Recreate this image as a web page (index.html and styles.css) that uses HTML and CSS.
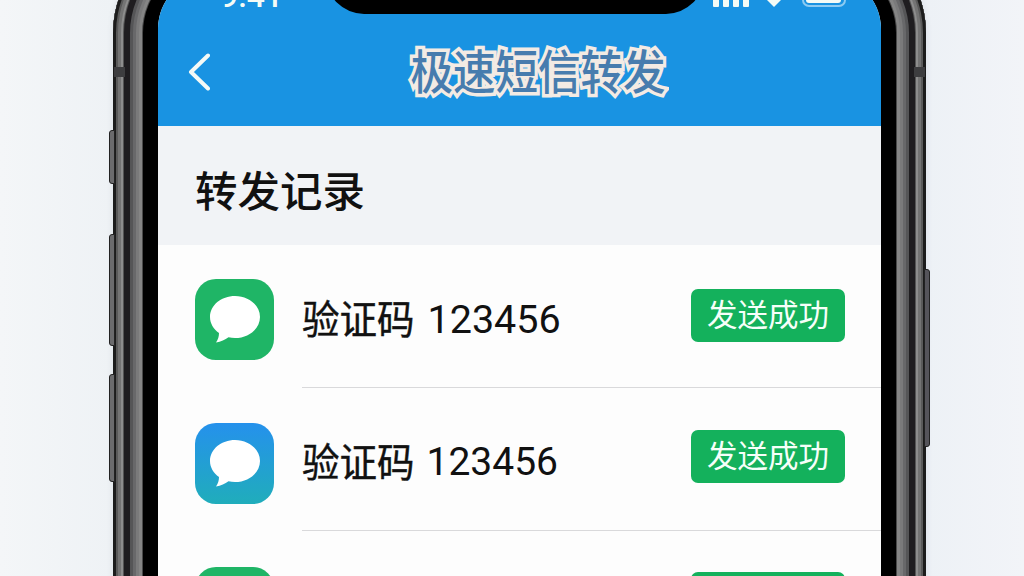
FILE: index.html
```html
<!DOCTYPE html>
<html lang="zh-CN">
<head>
  <meta charset="UTF-8">
  <meta name="viewport" content="width=device-width, initial-scale=1.0">
  <title>极速短信转发</title>
  <link rel="stylesheet" href="styles.css">
</head>
<body>
  <div class="phone">
    <!-- Side buttons -->
    <span class="side-btn mute"></span>
    <span class="side-btn vol-up"></span>
    <span class="side-btn vol-down"></span>
    <span class="side-btn power"></span>
    <span class="antenna left"></span>
    <span class="antenna right"></span>

    <div class="screen">
      <div class="notch"></div>

      <header class="header">
        <div class="status-bar">
          <span class="time">9:41</span>
          <svg class="status-icons" width="136" height="26" viewBox="0 0 136 26" fill="#f4fbf6">
            <rect x="0" y="14" width="6" height="12" rx="1"/>
            <rect x="10" y="10" width="6" height="16" rx="1"/>
            <rect x="20" y="6" width="6" height="20" rx="1"/>
            <rect x="30" y="2" width="6" height="24" rx="1"/>
            <path d="M54 19q7-6 14 0l-7 7z"/>
            <rect x="90" y="1" width="42" height="24" rx="6" fill="none" stroke="#8ccbf2" stroke-width="2"/>
            <rect x="93" y="4" width="35" height="18" rx="3"/>
          </svg>
        </div>
        <div class="title-bar">
          <svg class="back" width="22" height="38" viewBox="0 0 22 38" fill="none" stroke="#f4faf7" stroke-width="4" stroke-linecap="round" stroke-linejoin="round">
            <path d="M20 2.500L3 19L20 35.500"/>
          </svg>
          <h1 class="title">极速短信转发</h1>
        </div>
      </header>

      <div class="section-head">
        <h2>转发记录</h2>
      </div>

      <!-- Records -->
      <ul class="records">
        <li class="record">
          <div class="app-icon green">
            <svg width="50" height="47" viewBox="0 0 50 47" fill="#fff"><path d="M25 0C11.200 0 0 9.300 0 21C0 27.500 3.500 33 9 37C9 40.500 8 43.500 6 46.500C11 45.500 15 43.800 18.500 41.200C20.600 41.700 22.800 42 25 42C38.800 42 50 32.600 50 21S38.800 0 25 0z"/></svg>
          </div>
          <div class="record-body">
            <span class="record-text"><span class="label">验证码</span><span class="code">123456</span></span>
            <span class="badge">发送成功</span>
          </div>
        </li>
        <li class="record">
          <div class="app-icon blue">
            <svg width="50" height="47" viewBox="0 0 50 47" fill="#fff"><path d="M25 0C11.200 0 0 9.300 0 21C0 27.500 3.500 33 9 37C9 40.500 8 43.500 6 46.500C11 45.500 15 43.800 18.500 41.200C20.600 41.700 22.800 42 25 42C38.800 42 50 32.600 50 21S38.800 0 25 0z"/></svg>
          </div>
          <div class="record-body">
            <span class="record-text"><span class="label">验证码</span><span class="code">123456</span></span>
            <span class="badge">发送成功</span>
          </div>
        </li>
        <li class="record">
          <div class="app-icon green"></div>
          <div class="record-body">
            <span class="badge"></span>
          </div>
        </li>
      </ul>
    </div>
  </div>
</body>
</html>
```

FILE: styles.css
```css
:root {
  --blue: #1993e2;
  --green: #14b15c;
  --text-color: #111;
  --line: #d9d9db;
}

* {
  box-sizing: border-box;
  margin: 0;
  padding: 0;
}

html {
  overflow: hidden;
}

body {
  height: 576px;
  overflow: hidden;
  font-family: Roboto, "Noto Sans CJK SC", sans-serif;
  color: var(--text-color);
  background: linear-gradient(90deg, #f4f6f8 0, #eef2f5 113px, #edf1f6 926px, #f2f4f8 100%);
}

/* Phone frame, its top edge is cut off by the viewport */
.phone {
  position: relative;
  width: 813px;
  height: 900px;
  margin: -70px 0 0 113px;
  padding: 45px;
  border-radius: 103px;
  background: #000;
  box-shadow:
    inset 0 0 0 3px #1c1c1c,
    inset 0 0 0 5px #5a5a5a,
    inset 0 0 0 8px #747474,
    inset 0 0 0 10px #8d8d8d,
    inset 0 0 0 11px #555,
    inset 0 0 0 17px #1f1d20,
    inset 0 0 0 20px #555557,
    inset 0 0 0 23px #68686a,
    inset 0 0 0 26px #7a7a7b,
    inset 0 0 0 29px #858585,
    inset 0 0 0 30px #4a4a4a,
    0 0 6px rgba(90, 100, 115, 0.12);
}

.side-btn {
  position: absolute;
  left: -4px;
  width: 6px;
  border: 1px solid #222;
  border-radius: 3px 0 0 3px;
  background: #6b6b6d;
}

.mute {
  top: 200px;
  height: 54px;
}

.vol-up {
  top: 304px;
  height: 112px;
}

.vol-down {
  top: 444px;
  height: 108px;
}

.power {
  top: 339px;
  left: auto;
  right: -4px;
  height: 178px;
  border-radius: 0 3px 3px 0;
  background: #55545a;
}

.antenna {
  position: absolute;
  top: 137px;
  width: 11px;
  height: 10px;
  background: #3d3d3f;
}

.antenna.left {
  left: 1px;
}

.antenna.right {
  right: 1px;
}

.screen {
  position: relative;
  height: 810px;
  border-radius: 54px;
  overflow: hidden;
  background: #fdfdfd;
}

.notch {
  position: absolute;
  top: 0;
  left: 168px;
  width: 378px;
  height: 39px;
  border-radius: 0 0 38px 38px;
  background: #000;
}

.header {
  height: 151px;
  background: var(--blue);
}

.status-bar {
  display: flex;
  justify-content: space-between;
  align-items: flex-end;
  height: 33px;
  padding: 0 32px 1px 62px;
}

.time {
  font-size: 32px;
  font-weight: 500;
  line-height: 22px;
  color: #f4fbf6;
}

.title-bar {
  display: grid;
  grid-template-columns: 40px 1fr 40px;
  align-items: center;
  height: 116px;
  padding: 14px 13px 0 30px;
}

.back {
  margin-top: -2px;
}

.title {
  justify-self: center;
  margin-left: 20px;
  font-size: 47px;
  font-weight: 500;
  line-height: 56px;
  white-space: nowrap;
  color: #477cae;
  -webkit-text-stroke: 7px #f3ebe4;
  paint-order: stroke fill;
  stroke-linejoin: round;
  transform: scaleX(0.905);
}

.section-head {
  display: flex;
  align-items: center;
  height: 119px;
  padding: 6px 37px 0;
  background: #f1f3f6;
}

.section-head h2 {
  font-size: 42.500px;
  font-weight: 500;
}

.records {
  list-style: none;
}

.record {
  display: flex;
  align-items: center;
  gap: 28px;
  height: 143px;
  padding-left: 37px;
}

.app-icon {
  display: flex;
  align-items: center;
  justify-content: center;
  flex: none;
  width: 79px;
  height: 81px;
  margin-top: 6px;
  border-radius: 21px;
}

.green {
  background: #1fb566;
}

.blue {
  background: linear-gradient(180deg, #2591ec, #20adbb);
}

.record-body {
  display: flex;
  flex: 1;
  align-items: center;
  height: 100%;
  padding-right: 36px;
  border-bottom: 1px solid var(--line);
}

.record-text {
  display: flex;
  align-items: center;
  gap: 13px;
  margin-top: 6px;
}

.label {
  margin-top: -6px;
  font-size: 37.500px;
  -webkit-text-stroke: 0.4px var(--text-color);
  transform: scaleY(1.05);
}

.code {
  font-size: 39.500px;
}

.badge {
  width: 154px;
  height: 53px;
  margin: 0 0 2px auto;
  border-radius: 7px;
  background: var(--green);
  color: #f6fff9;
  font-size: 30.500px;
  line-height: 53px;
  text-align: center;
}

.record:nth-child(2) .app-icon {
  margin-top: 8px;
}

.record:nth-child(2) .record-text {
  gap: 12px;
}

.record:nth-child(2) .code {
  font-size: 39px;
}

.record:nth-child(2) .badge {
  margin-bottom: 6px;
}

.record:nth-child(3) .app-icon {
  margin-top: 10px;
}

.record:nth-child(3) .badge {
  margin-bottom: 8px;
}
```
